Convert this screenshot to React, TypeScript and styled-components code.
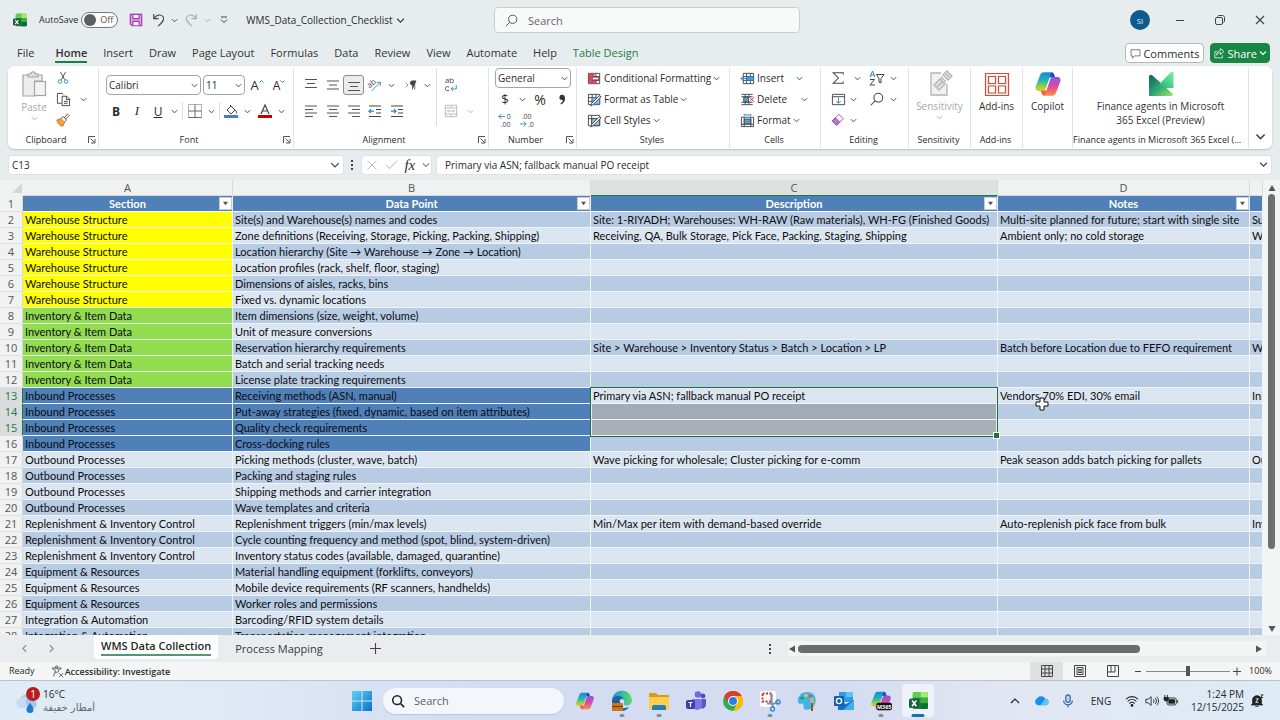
import React from 'react';
import styled, { createGlobalStyle, css } from 'styled-components';

const ui = `"Open Sans", "Noto Sans", "DejaVu Sans", sans-serif`;
const cellFont = `Lato, Carlito, "Open Sans", "DejaVu Sans", sans-serif`;

const Global = createGlobalStyle`
  * { box-sizing: border-box; }
  body { margin: 0; background: #e7edee; }
  button, input, select { font-family: inherit; font-size: inherit; color: inherit; margin: 0; }
  button { background: none; border: 0; padding: 0; cursor: pointer; }
  svg { display: block; flex: none; overflow: visible; }
`;

/* ---------- shell ---------- */
const Shell = styled.div`
  display: flex;
  flex-direction: column;
  height: 100vh;
  overflow: hidden;
  font: 10px/14px ${ui};
  color: #2b2b2b;
  background: #e7edee;
`;

const TitleBar = styled.header`
  display: grid;
  grid-template-columns: 494px 306px minmax(0, 1fr);
  align-items: center;
  height: 40px;
  flex: none;
`;

const TitleLeft = styled.div`
  display: flex;
  align-items: center;
  padding-left: 13px;
`;

const AutoSave = styled.label`
  display: flex;
  align-items: center;
  gap: 3px;
  margin: 0 6px 0 12px;
  font-size: 9px;
`;

const Toggle = styled.span`
  position: relative;
  display: flex;
  align-items: center;
  width: 37px;
  height: 16px;
  border: 1px solid #777;
  border-radius: 8px;
  background: #fdfdfd;
  padding-left: 18px;
  color: #555;
  &::before {
    content: '';
    position: absolute;
    left: 2px;
    top: 1px;
    width: 12px;
    height: 12px;
    border-radius: 50%;
    background: #5c5f60;
  }
  input { position: absolute; inset: 0; opacity: 0; }
`;

const BarButton = styled.button<{ $w: number }>`
  display: flex;
  align-items: center;
  justify-content: center;
  flex: none;
  width: ${(p) => p.$w}px;
  height: 20px;
`;

const FileName = styled.button`
  display: flex;
  align-items: center;
  gap: 3px;
  margin-left: 9px;
`;

const SearchBox = styled.label`
  display: flex;
  align-items: center;
  gap: 10px;
  height: 26px;
  padding: 0 10px;
  border: 1px solid #c9cfd0;
  border-radius: 4px;
  background: #f8fafa;
  font-size: 11px;
  input {
    flex: 1;
    min-width: 0;
    border: 0;
    padding: 0;
    background: none;
    outline: 0;
  }
  input::placeholder { color: #666; opacity: 1; }
`;

const WindowButtons = styled.div`
  display: flex;
  align-items: center;
  justify-content: flex-end;
`;

const Avatar = styled.button`
  width: 20px;
  height: 20px;
  margin-right: 10px;
  border-radius: 50%;
  background: #0d5a8c;
  color: #e8f2f8;
  font-size: 8px;
`;

/* ---------- ribbon tabs ---------- */
const TabRow = styled.nav`
  display: flex;
  align-items: center;
  height: 26px;
  flex: none;
  padding: 0 10px 0 9px;
  font-size: 11px;
`;

const Tab = styled.button<{ $active?: boolean; $accent?: boolean }>`
  height: 22px;
  padding: 0 8px;
  color: ${(p) => (p.$accent ? '#1e7b45' : '#333')};
  font-weight: ${(p) => (p.$active ? 600 : 400)};
  &:first-child { margin-right: 5px; }
  span {
    display: block;
    line-height: 17px;
    border-bottom: 2px solid ${(p) => (p.$active ? '#1b7f43' : 'transparent')};
  }
`;

const Actions = styled.div`
  display: flex;
  gap: 6px;
  margin-left: auto;
`;

const ActionButton = styled.button<{ $primary?: boolean }>`
  display: flex;
  align-items: center;
  gap: 2px;
  height: 20px;
  padding: 0 ${(p) => (p.$primary ? 2 : 4)}px;
  border-radius: 4px;
  border: 1px solid ${(p) => (p.$primary ? '#178743' : '#b4b8b9')};
  background: ${(p) => (p.$primary ? '#178743' : '#fff')};
  color: ${(p) => (p.$primary ? '#fff' : '#2b2b2b')};
`;

/* ---------- ribbon ---------- */
const Ribbon = styled.section`
  display: flex;
  flex: none;
  height: 83px;
  margin: 0 8px;
  padding: 2px 0 1px;
  background: #fff;
  border-radius: 6px;
  box-shadow: 0 1px 2px #b9c0c3;
`;

const Group = styled.div<{ $w: number }>`
  display: flex;
  flex-direction: column;
  flex: 0 0 ${(p) => p.$w}px;
  min-width: 0;
  border-right: 1px solid #e1e4e5;
`;

const Body = styled.div<{ $pad?: number; $x?: number; $gap?: number; $w?: number }>`
  display: flex;
  flex-direction: column;
  flex: ${(p) => (p.$w ? `0 0 ${p.$w}px` : '1')};
  gap: ${(p) => p.$gap ?? 0}px;
  padding: ${(p) => p.$pad ?? 0}px 0 0 ${(p) => p.$x ?? 0}px;
`;

const Caption = styled.div`
  display: flex;
  align-items: center;
  gap: 4px;
  height: 16px;
  padding-right: 2px;
  font-size: 9px;
  line-height: 16px;
  white-space: nowrap;
  span {
    flex: 1;
    text-align: center;
    overflow: hidden;
    text-overflow: ellipsis;
  }
`;

const Row = styled.div<{ $gap?: number }>`
  display: flex;
  align-items: center;
  height: 20px;
  gap: ${(p) => p.$gap ?? 0}px;
`;

const Columns = styled.div`
  display: flex;
  flex: 1;
`;

const Tool = styled.button<{ $w?: number; $on?: boolean; $dim?: boolean }>`
  display: flex;
  align-items: center;
  justify-content: center;
  flex: none;
  width: ${(p) => p.$w ?? 22}px;
  height: 20px;
  opacity: ${(p) => (p.$dim ? 0.4 : 1)};
  ${(p) =>
    p.$on &&
    css`
      background: #ececec;
      border: 1px solid #8d8d8d;
      border-radius: 3px;
    `}
`;

const Divider = styled.i<{ $h?: number; $m?: number }>`
  width: 1px;
  height: ${(p) => p.$h ?? 18}px;
  margin: 0 ${(p) => p.$m ?? 0}px;
  background: #dcdfe0;
`;

const Combo = styled.span<{ $w: number }>`
  position: relative;
  display: flex;
  align-items: center;
  flex: none;
  width: ${(p) => p.$w}px;
  height: 20px;
  border: 1px solid #a3a6a7;
  border-radius: 4px;
  background: #fff;
  select {
    appearance: none;
    flex: 1;
    min-width: 0;
    height: 18px;
    padding: 0 0 0 2px;
    border: 0;
    background: none;
  }
  svg { position: absolute; right: 2px; pointer-events: none; }
`;

const TextTool = styled.button`
  display: flex;
  align-items: center;
  gap: 2px;
  height: 20px;
  white-space: nowrap;
`;

const Spacer = styled.i<{ $w: number }>`
  flex: none;
  width: ${(p) => p.$w}px;
`;

const Push = styled.i`
  margin-left: auto;
`;

const BigTool = styled.button<{ $dim?: boolean }>`
  display: flex;
  flex-direction: column;
  align-items: center;
  width: 100%;
  gap: 1px;
  line-height: 14px;
  color: ${(p) => (p.$dim ? '#a9a9a9' : '#333')};
`;

const Letter = styled.span<{ $bold?: boolean; $italic?: boolean; $line?: boolean; $size?: number }>`
  font-size: ${(p) => p.$size ?? 12}px;
  font-weight: ${(p) => (p.$bold ? 700 : 400)};
  font-style: ${(p) => (p.$italic ? 'italic' : 'normal')};
  text-decoration: ${(p) => (p.$line ? 'underline' : 'none')};
  ${(p) => p.$italic && css`font-family: "Liberation Serif", serif;`}
`;

const Collapse = styled.button`
  align-self: flex-end;
  margin: 0 6px 6px auto;
`;

/* ---------- formula bar ---------- */
const FormulaRow = styled.section`
  display: flex;
  align-items: center;
  flex: none;
  height: 31px;
  padding: 0 8px;
`;

const Field = styled.label<{ $w?: number }>`
  display: flex;
  align-items: center;
  flex: ${(p) => (p.$w ? `0 0 ${p.$w}px` : '1 1 0')};
  min-width: 0;
  height: 20px;
  padding: 0 3px;
  border: 1px solid #dde2e3;
  border-radius: 4px;
  background: #fff;
  input {
    flex: 1;
    min-width: 0;
    height: 18px;
    padding: 0;
    border: 0;
    outline: 0;
    background: none;
  }
`;

const Dots = styled.span<{ $w: number }>`
  display: flex;
  justify-content: center;
  width: ${(p) => p.$w}px;
`;

const FxBox = styled.div`
  display: flex;
  align-items: center;
  justify-content: space-between;
  width: 71px;
  height: 20px;
  padding: 0 1px 0 4px;
  margin-right: 4px;
  border: 1px solid #dde2e3;
  border-radius: 4px;
  background: #fff;
`;

const Fx = styled.em`
  font: italic 400 15px/16px "Liberation Serif", serif;
`;

/* ---------- grid ---------- */
const GridArea = styled.main`
  display: flex;
  flex: 1;
  min-height: 0;
  background: #f2f3f3;
`;

const Sheet = styled.div`
  position: relative;
  flex: 1;
  min-width: 0;
  overflow: hidden;
`;

const Table = styled.table`
  width: 100%;
  table-layout: fixed;
  border-collapse: separate;
  border-spacing: 0;
  font: 11px/15px ${cellFont};
  color: #0b0b12;
  th, td {
    height: 16px;
    padding: 0;
    font-weight: 400;
    white-space: nowrap;
  }
`;

const Letters = styled.th<{ $sel?: boolean }>`
  font: 11px/15px ${ui};
  color: #555;
  background: ${(p) => (p.$sel ? '#dfe1e1' : '#f0f1f1')};
  border-right: 1px solid #d9dbdb;
  border-bottom: 1px solid ${(p) => (p.$sel ? '#1e7b45' : '#d9dbdb')};
`;

const Corner = styled.th`
  background: #f0f1f1;
  border-right: 1px solid #f0f1f1;
  svg { margin-left: auto; }
`;

const RowNo = styled.th<{ $sel?: boolean }>`
  font: 11px/15px ${ui};
  text-align: center;
  color: ${(p) => (p.$sel ? '#1e7b45' : '#555')};
  background: ${(p) => (p.$sel ? '#d9dcdc' : '#f0f1f1')};
  border-right: 1px solid ${(p) => (p.$sel ? '#1e7b45' : '#d5d8d8')};
  border-bottom: 1px solid #dcdfdf;
`;

const HeadCell = styled.th`
  position: relative;
  && { font-weight: 700; }
  color: #fff;
  background: #5080b8;
  border-right: 1px solid #e5edf6;
  border-bottom: 1px solid #fff;
  overflow: hidden;
`;

const Filter = styled.button`
  position: absolute;
  right: 0;
  top: 1px;
  display: flex;
  align-items: center;
  justify-content: center;
  width: 13px;
  height: 13px;
  background: #fff;
  border: 1px solid #c5cbd2;
`;

const Cell = styled.td<{ $bg: string; $open?: boolean }>`
  position: relative;
  background: ${(p) => p.$bg};
  border-right: 1px solid #eef4fa;
  border-bottom: 1px solid #eef4fa;
  overflow: ${(p) => (p.$open ? 'visible' : 'hidden')};
  && { padding-left: 2px; }
`;

const Selection = styled.i`
  position: absolute;
  z-index: 2;
  left: -1px;
  top: -1px;
  width: calc(100% + 2px);
  height: 50px;
  border: 1px solid #1e6e42;
  outline: 1px solid #e8f0ea;
  outline-offset: -2px;
  pointer-events: none;
  &::after {
    content: '';
    position: absolute;
    right: -3px;
    bottom: -3px;
    width: 5px;
    height: 5px;
    background: #1e6e42;
    border: 1px solid #fff;
  }
`;

const Pointer = styled.span`
  position: absolute;
  left: 1035px;
  top: 217px;
  z-index: 3;
`;

const VScroll = styled.div`
  display: flex;
  flex-direction: column;
  align-items: center;
  gap: 2px;
  width: 17px;
  padding: 4px 0 2px;
  background: #f3f4f4;
`;

const VThumb = styled.i`
  flex: 0 1 355px;
  width: 7px;
  margin-bottom: auto;
  border-radius: 4px;
  background: #6f6f6f;
`;

/* ---------- sheet tabs ---------- */
const SheetBar = styled.div`
  display: flex;
  align-items: center;
  flex: none;
  height: 27px;
  padding: 0 14px 0 10px;
  background: #e9edef;
  font-size: 11px;
`;

const SheetTab = styled.button<{ $active?: boolean }>`
  align-self: flex-start;
  height: 24px;
  padding: 0 7px;
  border-radius: 0 0 4px 4px;
  ${(p) =>
    p.$active
      ? css`
          background: #fff;
          font-weight: 600;
          color: #1f2a25;
          span { display: block; line-height: 16px; border-bottom: 2px solid #4e9a74; }
        `
      : css`
          padding: 3px 17px 0;
          color: #3b3b3b;
        `}
`;

const HScroll = styled.div`
  display: flex;
  align-items: center;
  gap: 2px;
  flex: 0 0 478px;
  height: 15px;
  padding-right: 3px;
  background: #f3f4f4;
`;

const HThumb = styled.i`
  flex: 0 1 342px;
  height: 8px;
  margin-right: auto;
  border-radius: 4px;
  background: #6c6c6c;
`;

const Status = styled.footer`
  display: flex;
  align-items: center;
  flex: none;
  height: 19px;
  padding: 0 8px 0 9px;
  background: #f4f5f5;
  border-bottom: 1px solid #b9c3cb;
  font-size: 9px;
`;

const Access = styled.button`
  display: flex;
  align-items: center;
  gap: 1px;
  margin: 0 auto 0 16px;
  font-weight: 600;
`;

const ViewButton = styled.button<{ $on?: boolean }>`
  display: flex;
  align-items: center;
  justify-content: center;
  width: 33px;
  height: 18px;
  background: ${(p) => (p.$on ? '#dfe1e1' : 'transparent')};
`;

const ZoomSlider = styled.input`
  appearance: none;
  width: 84px;
  height: 14px;
  margin: 0 3px;
  background: linear-gradient(#8a8a8a, #8a8a8a) center / 100% 1px no-repeat;
  &::-webkit-slider-thumb {
    appearance: none;
    width: 4px;
    height: 10px;
    background: #555;
  }
`;

/* ---------- taskbar ---------- */
const Taskbar = styled.footer`
  display: grid;
  grid-template-columns: minmax(0, 1fr) auto minmax(0, 1fr);
  align-items: center;
  flex: none;
  height: 39px;
  background: linear-gradient(90deg, #dfebf5 0, #dfe9f6 18%, #d4dcf2 38%, #d5dcf1 66%, #e2e6f3 78%, #dcebf4 100%);
`;

const Weather = styled.button`
  display: flex;
  align-items: center;
  gap: 2px;
  padding-left: 15px;
  text-align: left;
  line-height: 13px;
  span { display: block; }
  span + span { font-family: "DejaVu Sans", sans-serif; color: #666; }
`;

const Apps = styled.nav`
  display: flex;
  align-items: center;
  gap: 5px;
`;

const AppButton = styled.button<{ $active?: boolean; $running?: boolean }>`
  position: relative;
  display: flex;
  align-items: center;
  justify-content: center;
  width: 32px;
  height: 33px;
  border-radius: 4px;
  background: ${(p) => (p.$active ? '#edf2fa' : 'transparent')};
  &::after {
    content: '';
    position: absolute;
    bottom: 0;
    left: 50%;
    transform: translateX(-50%);
    display: ${(p) => (p.$active || p.$running ? 'block' : 'none')};
    width: ${(p) => (p.$active ? 13 : 5)}px;
    height: 3px;
    border-radius: 2px;
    background: ${(p) => (p.$active ? '#1673ad' : '#848a96')};
  }
`;

const TaskSearch = styled.label`
  display: flex;
  align-items: center;
  gap: 9px;
  width: 181px;
  height: 26px;
  padding: 0 8px;
  border-radius: 13px;
  background: #f3f7fc;
  box-shadow: 0 1px 1px #bcc5d6;
  font-size: 11px;
  input { flex: 1; min-width: 0; border: 0; padding: 0; background: none; outline: 0; }
  input::placeholder { color: #5c6068; opacity: 1; }
`;

const Tray = styled.div`
  display: flex;
  align-items: center;
  justify-content: flex-end;
  padding-right: 16px;
`;

const Clock = styled.time`
  width: 64px;
  margin-right: 6px;
  text-align: right;
  line-height: 13px;
  white-space: nowrap;
`;

/* ---------- icons ---------- */
type IconProps = { s?: number; h?: number; vb?: string; children: React.ReactNode; c?: string; sw?: number };
const Icon = ({ s = 16, h, vb = '0 0 16 16', children, c = '#444', sw = 1 }: IconProps) => (
  <svg width={s} height={h ?? s} viewBox={vb} fill="none" stroke={c} strokeWidth={sw} aria-hidden="true">
    {children}
  </svg>
);
const Chev = ({ s = 7, c = '#444' }: { s?: number; c?: string }) => (
  <Icon s={s} vb="0 0 8 8" c={c} sw={1.1}><path d="M1 2.500l3 3 3-3" /></Icon>
);
const Drop = ({ w = 12, dim }: { w?: number; dim?: boolean }) => (
  <Tool $w={w} $dim={dim} aria-label="More options"><Chev s={7} /></Tool>
);
const Launcher = () => (
  <Icon s={8} vb="0 0 8 8" c="#555"><path d="M.5 7V.5H7M2.500 2.500L6.500 6.500M7 3v4H3" /></Icon>
);
const Lines = ({ d }: { d: string }) => <Icon s={14} vb="0 0 14 14" c="#555" sw={1.2}><path d={d} /></Icon>;

const ExcelLogo = ({ s = 14 }: { s?: number }) => (
  <Icon s={s} vb="0 0 20 20" c="none">
    <rect x="4" y="1" width="16" height="18" rx="2" fill="#1d8a3f" />
    <path d="M4 3a2 2 0 012-2h6v6H4z" fill="#5fd04f" />
    <path d="M12 1h6a2 2 0 012 2v4h-8z" fill="#a4ec6b" />
    <path d="M12 7h8v6h-8z" fill="#3dae46" />
    <path d="M12 13h8v4a2 2 0 01-2 2h-6z" fill="#0f6e33" />
    <rect x="0" y="8" width="11" height="10" rx="2" fill="#14613a" />
    <path d="M3.200 10l4.600 6M7.800 10l-4.600 6" stroke="#fff" strokeWidth="1.600" />
  </Icon>
);
const CopilotLogo = ({ s = 20, tag }: { s?: number; tag?: boolean }) => (
  <Icon s={s} vb="0 0 24 24" c="none">
    <defs>
      <linearGradient id="cpA" x1="0" y1="0" x2="0" y2="1">
        <stop offset="0" stopColor="#1788e0" /><stop offset=".45" stopColor="#22b8b0" /><stop offset=".8" stopColor="#9fd13f" /><stop offset="1" stopColor="#f6c52b" />
      </linearGradient>
      <linearGradient id="cpB" x1="0" y1="0" x2="0" y2="1">
        <stop offset="0" stopColor="#8a55e8" /><stop offset=".5" stopColor="#e0489f" /><stop offset="1" stopColor="#ff8f3c" />
      </linearGradient>
    </defs>
    <path d="M15 2H8.500C6.500 2 5.500 3.500 5 5L1.500 14c-.8 2.500.5 4 2.500 4h3.500c1.500 0 2.300-1 2.800-2.500L13.500 6c.4-1.500 1-2.500 2.500-2.500z" fill="url(#cpA)" />
    <path d="M15 2c1.300 0 2 .8 2.400 2l.8 2.500h-5L14 4z" fill="#1a4fc0" />
    <path d="M9 22h6.500c2 0 3-1.500 3.500-3l3.500-9c.8-2.500-.5-4-2.500-4h-3.500c-1.500 0-2.300 1-2.800 2.500L10.500 18c-.4 1.500-1 2.500-2.500 2.500z" fill="url(#cpB)" />
    <path d="M9 22c-1.300 0-2-.8-2.400-2L5.800 17.500h5L10 20z" fill="#f0633c" />
    {tag && <rect x="7" y="14" width="17" height="8" rx="2" fill="#111" />}
    {tag && <text x="15.500" y="20.200" fontSize="6" fontWeight="700" fill="#fff" textAnchor="middle">M365</text>}
  </Icon>
);

const table3 = 'M1.500 2.500h12v11h-12zM1.500 6h12M1.500 10h12M5.500 2.500v11M9.500 2.500v11';

/* ---------- data ---------- */
const tabs = ['File', 'Home', 'Insert', 'Draw', 'Page Layout', 'Formulas', 'Data', 'Review', 'View', 'Automate', 'Help', 'Table Design'];

type Line = [string, string, string?, string?, string?];
const W = 'Warehouse Structure';
const V = 'Inventory & Item Data';
const I = 'Inbound Processes';
const O = 'Outbound Processes';
const R = 'Replenishment & Inventory Control';
const E = 'Equipment & Resources';
const A = 'Integration & Automation';
const lines: Line[] = [
  [W, 'Site(s) and Warehouse(s) names and codes', 'Site: 1-RIYADH; Warehouses: WH-RAW (Raw materials), WH-FG (Finished Goods)', 'Multi-site planned for future; start with single site', 'Su'],
  [W, 'Zone definitions (Receiving, Storage, Picking, Packing, Shipping)', 'Receiving, QA, Bulk Storage, Pick Face, Packing, Staging, Shipping', 'Ambient only; no cold storage', 'W'],
  [W, 'Location hierarchy (Site → Warehouse → Zone → Location)'],
  [W, 'Location profiles (rack, shelf, floor, staging)'],
  [W, 'Dimensions of aisles, racks, bins'],
  [W, 'Fixed vs. dynamic locations'],
  [V, 'Item dimensions (size, weight, volume)'],
  [V, 'Unit of measure conversions'],
  [V, 'Reservation hierarchy requirements', 'Site > Warehouse > Inventory Status > Batch > Location > LP', 'Batch before Location due to FEFO requirement', 'W'],
  [V, 'Batch and serial tracking needs'],
  [V, 'License plate tracking requirements'],
  [I, 'Receiving methods (ASN, manual)', 'Primary via ASN; fallback manual PO receipt', 'Vendors 70% EDI, 30% email', 'Inb'],
  [I, 'Put-away strategies (fixed, dynamic, based on item attributes)'],
  [I, 'Quality check requirements'],
  [I, 'Cross-docking rules'],
  [O, 'Picking methods (cluster, wave, batch)', 'Wave picking for wholesale; Cluster picking for e-comm', 'Peak season adds batch picking for pallets', 'Ou'],
  [O, 'Packing and staging rules'],
  [O, 'Shipping methods and carrier integration'],
  [O, 'Wave templates and criteria'],
  [R, 'Replenishment triggers (min/max levels)', 'Min/Max per item with demand-based override', 'Auto-replenish pick face from bulk', 'Inv'],
  [R, 'Cycle counting frequency and method (spot, blind, system-driven)'],
  [R, 'Inventory status codes (available, damaged, quarantine)'],
  [E, 'Material handling equipment (forklifts, conveyors)'],
  [E, 'Mobile device requirements (RF scanners, handhelds)'],
  [E, 'Worker roles and permissions'],
  [A, 'Barcoding/RFID system details'],
  [A, 'Transportation management integration'],
];

const fillFor = (n: number, col: number) => {
  if (col === 0 && n <= 7) return '#ffff00';
  if (col === 0 && n <= 12) return '#92dc50';
  if (col <= 1 && n >= 13 && n <= 16) return '#5080b8';
  if (col === 2 && n === 14) return '#a3abb7';
  if (col === 2 && n === 15) return '#a9afb7';
  return n % 2 === 0 ? '#b7cbe2' : '#dce6f0';
};

/* ---------- ribbon groups ---------- */
const Clipboard = () => (
  <Group $w={91}>
    <Columns>
      <Body $pad={3} $x={8} $w={44}>
        <BigTool $dim>
          <Icon s={26} h={28} vb="0 0 26 28" c="#a5a5a5" sw={1.2}>
            <path d="M2 4h19v6h-7v15H2z" fill="#ededed" /><path d="M7 6V3h2.500C10 0 14 0 14.500 3H17v3z" fill="#ddd" /><rect x="13.500" y="10.500" width="11" height="14" fill="#f3f3f3" />
          </Icon>
          Paste
          <Chev c="#aaa" />
        </BigTool>
      </Body>
      <Body $gap={1}>
        <Row><Tool $w={22} aria-label="Cut"><Icon s={14}><path d="M5 1l5 9M11 1L6 10" /><circle cx="4.500" cy="12" r="2" stroke="#2d86b5" /><circle cx="11.500" cy="12" r="2" stroke="#2d86b5" /></Icon></Tool></Row>
        <Row><Tool $w={22} aria-label="Copy"><Icon s={15}><path d="M6 12H1.500V1.500H7l1 1M6.500 4.500h5l3 3v7h-8zM11 4.500V8h3.500M8.500 10h4M8.500 12h4" /></Icon></Tool><Drop w={18} /></Row>
        <Row><Tool $w={22} aria-label="Format Painter"><Icon s={14}><path d="M1 8l5-2 4 4-2 5c-3 0-6-2-7-7z" fill="#f0a04a" stroke="#cf6f1a" /><path d="M6 6l2-2 4 4-2 2M9.500 5.500L13 1l2 2-4 4" fill="#fff" /></Icon></Tool></Row>
      </Body>
    </Columns>
    <Caption><span>Clipboard</span><Launcher /></Caption>
  </Group>
);

const FontGroup = () => (
  <Group $w={195}>
    <Body $pad={7} $x={7} $gap={6}>
      <Row $gap={2}>
        <Combo $w={95}><select aria-label="Font" defaultValue="Calibri"><option>Calibri</option></select><Chev /></Combo>
        <Combo $w={42}><select aria-label="Font size" defaultValue="11"><option>11</option></select><Chev /></Combo>
        <Tool $w={20} aria-label="Increase font size"><Letter $size={13}>A</Letter><Icon s={5} h={13} vb="0 0 8 20" c="#2d86b5" sw={1.6}><path d="M1 5l3-3 3 3" /></Icon></Tool>
        <Tool $w={20} aria-label="Decrease font size"><Letter $size={12}>A</Letter><Icon s={5} h={13} vb="0 0 8 20" c="#2d86b5" sw={1.6}><path d="M1 2l3 3 3-3" /></Icon></Tool>
      </Row>
      <Row>
        <Tool $w={20} aria-label="Bold"><Letter $bold>B</Letter></Tool>
        <Tool aria-label="Italic"><Letter $italic $size={13}>I</Letter></Tool>
        <Tool $w={20} aria-label="Underline"><Letter $line>U</Letter></Tool>
        <Drop /><Divider $m={2} />
        <Tool $w={20} aria-label="Borders"><Icon s={14} vb="0 0 14 14" c="#666"><path d="M.5.500h13v13H.5z" strokeDasharray="1 1" /><path d="M7 .5v13M.5 7h13M.5 13.500h13" /></Icon></Tool>
        <Drop /><Divider $m={2} />
        <Tool $w={18} aria-label="Fill colour"><Icon s={14} vb="0 0 14 14"><path d="M3 6l4-4 4 4-4 4zM6 1l3 3M11 6c2 1.500 2 3 1 3.500" fill="none" /><rect y="11" width="14" height="3" fill="#4a7ebb" stroke="none" /></Icon></Tool>
        <Drop w={14} />
        <Tool aria-label="Font colour"><Icon s={14} vb="0 0 14 14" sw={1.2}><path d="M3 10l4-9 4 9M4.500 7h5" /><rect y="11" width="14" height="3" fill="#c00000" stroke="none" /></Icon></Tool>
        <Drop w={10} />
      </Row>
    </Body>
    <Caption><span>Font</span><Launcher /></Caption>
  </Group>
);

const Alignment = () => (
  <Group $w={195}>
    <Columns>
      <Body $pad={7} $x={6} $gap={6}>
        <Row>
          <Tool aria-label="Top align"><Lines d="M1 1.500h12M3 5.500h8M1 9.500h12" /></Tool>
          <Tool $w={21} aria-label="Middle align"><Lines d="M1 3h12M3 7h8M1 11h12" /></Tool>
          <Tool $w={21} $on aria-label="Bottom align"><Lines d="M1 4.500h12M3 8.500h8M1 12.500h12" /></Tool>
          <Tool $w={21} aria-label="Orientation"><Icon s={14}><text x="0" y="9" fontSize="9" fill="#444" stroke="none" transform="rotate(-40 5 8)">ab</text><path d="M4 15L14 5M10 5h4v4" stroke="#2d86b5" /></Icon></Tool>
          <Drop /><Spacer $w={4} />
          <Tool $w={20} aria-label="Text direction"><Icon s={12}><path d="M1 5l3 3-3 3" stroke="#2d86b5" /><path d="M10 14V2.500h5M13 14V2.500M10 8c-4 0-4-5.500 0-5.500z" fill="#444" /></Icon></Tool>
          <Drop />
        </Row>
        <Row>
          <Tool aria-label="Align left"><Lines d="M1 2h12M1 5.500h8M1 9h12M1 12.500h8" /></Tool>
          <Tool $w={21} aria-label="Centre"><Lines d="M1 2h12M3 5.500h8M1 9h12M3 12.500h8" /></Tool>
          <Tool $w={21} aria-label="Align right"><Lines d="M1 2h12M5 5.500h8M1 9h12M5 12.500h8" /></Tool>
          <Tool $w={22} aria-label="Decrease indent"><Icon s={14} vb="0 0 14 14" sw={1.2}><path d="M1 2h12M8 5.500h5M8 9h5M1 12.500h12" /><path d="M6 7.200H1M3 5.200L1 7.200l2 2" stroke="#2d86b5" /></Icon></Tool>
          <Tool $w={21} aria-label="Increase indent"><Icon s={14} vb="0 0 14 14" sw={1.2}><path d="M1 2h12M8 5.500h5M8 9h5M1 12.500h12" /><path d="M1 7.200h5M4 5.200l2 2-2 2" stroke="#2d86b5" /></Icon></Tool>
        </Row>
      </Body>
      <Divider $h={58} $m={3} />
      <Body $pad={7} $gap={6}>
        <Row><Tool aria-label="Wrap text"><Icon s={14}><text x="1" y="6" fontSize="9" fill="#444" stroke="none">ab</text><path d="M6 10.500c-3-1.500-4.500 0-4.500 1.800S4 15.500 6 14" /><path d="M14 8v4.500H8M10.500 10L8 12.500l2.500 2.500" stroke="#2d86b5" /></Icon></Tool></Row>
        <Row><Tool $dim aria-label="Merge"><Icon s={14}><path d="M1.500 1.500h13v13h-13zM1.500 4.500h13M1.500 11.500h13M8 1.500v3M8 11.500v3M4 8h8M5.500 6.500L4 8l1.500 1.500M10.500 6.500L12 8l-1.500 1.500" /></Icon></Tool><Drop w={16} dim /></Row>
      </Body>
    </Columns>
    <Caption><span>Alignment</span><Launcher /></Caption>
  </Group>
);

const NumberGroup = () => (
  <Group $w={88}>
    <Body $x={6} $gap={1}>
      <Row><Combo $w={76}><select aria-label="Number format" defaultValue="General"><option>General</option></select><Chev /></Combo></Row>
      <Row>
        <Tool $w={20} aria-label="Currency"><Letter $size={13}>$</Letter></Tool><Drop w={14} />
        <Tool aria-label="Percent"><Letter $size={14}>%</Letter></Tool>
        <Tool aria-label="Comma style"><Icon s={8} h={11} vb="0 0 9 13" c="none"><path d="M5 1a3 3 0 00-1 6c.8.200 1.500 0 1.500 0-.3 2-1.500 3.500-3 4.500l.8 1C7 10.500 8.500 7.500 8 4 7.700 2 6.500 1 5 1z" fill="#333" /></Icon></Tool>
      </Row>
      <Row $gap={2}>
        <Tool $w={20} aria-label="Increase decimal"><Icon s={14}><text x="10" y="7" fontSize="8" fill="#444" stroke="none">0</text><text x="3" y="16" fontSize="8" fill="#444" stroke="none">.00</text><path d="M8 4H1M4 1L1 4l3 3" stroke="#2d86b5" /></Icon></Tool>
        <Tool $w={20} aria-label="Decrease decimal"><Icon s={14}><text x="2" y="7" fontSize="8" fill="#444" stroke="none">.00</text><text x="9" y="16" fontSize="8" fill="#444" stroke="none">.0</text><path d="M0 12.500h7M4 9.500l3 3-3 3" stroke="#2d86b5" /></Icon></Tool>
      </Row>
    </Body>
    <Caption><span>Number</span><Launcher /></Caption>
  </Group>
);

const Styles = () => (
  <Group $w={153}>
    <Body $x={10} $gap={1}>
      <TextTool><Icon s={15}><path d={table3} /><path d="M2 3h6v3H5v4h5v3H2z" fill="#e0485a" stroke="none" /><path d="M5.500 6.500h7v3h-7z" fill="#fff" stroke="#8a2c3a" /></Icon>Conditional Formatting<Chev /></TextTool>
      <TextTool><Icon s={15}><path d={table3} /><path d="M5.500 6h8v7h-8z" fill="#8cc4ea" stroke="#2d78b5" /><path d="M15 5L7 13l-3 2 1-3 8-8z" fill="#fff" /></Icon>Format as Table<Chev /></TextTool>
      <TextTool><Icon s={15}><path d="M1.500 2.500h12v11h-12zM1.500 6h12M5 2.500v11" /><path d="M5 6h8.500v7.500H5z" fill="#8cc4ea" /><path d="M15 5L7 13l-3 2 1-3 8-8z" fill="#fff" /></Icon>Cell Styles<Chev /></TextTool>
    </Body>
    <Caption><span>Styles</span></Caption>
  </Group>
);

const Cells = () => (
  <Group $w={91}>
    <Body $x={10} $gap={1}>
      <TextTool><Icon s={15}><path d="M3.500 2.500h11v11h-11zM3.500 6h11M3.500 10h11M7 2.500v11M11 2.500v11" /><path d="M7 6h7.500v4H7z" fill="#4aa3df" stroke="#2d78b5" /><path d="M7 8H1M3.500 5.500L1 8l2.500 2.500" stroke="#2d86b5" /></Icon>Insert<Spacer $w={8} /><Chev /></TextTool>
      <TextTool><Icon s={15}><path d="M1.500 2.500h12M1.500 5h12M5.500 2.500V5M9.500 2.500V5M1.500 11h12M1.500 13.500h12M5.500 11v2.500M9.500 11v2.500" /><path d="M4 5.500h5v5H4z" fill="#4aa3df" /><path d="M10 5.500l5 5M15 5.500l-5 5" stroke="#c8283c" /></Icon>Delete<Spacer $w={10} /><Chev /></TextTool>
      <TextTool><Icon s={15}><path d="M1.500 4.500h13v10h-13zM1.500 12h13M4.500 4.500v10M11.500 4.500v10" /><path d="M4.500 6.500h7v5h-7z" fill="#4aa3df" /><path d="M4.500 1v2M11.500 1v2M4.500 2h7" stroke="#2d86b5" /></Icon>Format<Chev /></TextTool>
    </Body>
    <Caption><span>Cells</span></Caption>
  </Group>
);

const Editing = () => (
  <Group $w={88}>
    <Body $x={6} $gap={1}>
      <Row><Tool aria-label="AutoSum"><Icon s={14} sw={1.2}><path d="M14 4V2H2.500l6 6-6 6H14v-2" /></Icon></Tool><Spacer $w={2} /><Drop /><Spacer $w={2} />
        <Tool $w={24} aria-label="Sort and filter"><Icon s={16}><path d="M1 7l2.500-6L6 7M2 5h3" stroke="#2d86b5" /><path d="M1 9.500h4.500L1 15h5" /><path d="M7.500 4.500H15l-3 4V13l-2-1V8.500z" /></Icon></Tool><Drop w={8} /></Row>
      <Row><Tool aria-label="Fill"><Icon s={15}><path d="M1.500 2.500h13v11h-13zM1.500 5h13" /><path d="M8 6v6M5.500 9.500L8 12l2.500-2.500" stroke="#2d86b5" /></Icon></Tool><Drop w={8} /><Spacer $w={8} />
        <Tool $w={24} aria-label="Find"><Icon s={14} sw={1.2}><circle cx="9.500" cy="6.500" r="5" /><path d="M6 10l-5 5" /></Icon></Tool><Drop w={8} /></Row>
      <Row><Tool aria-label="Clear"><Icon s={14} c="#8a3fa8"><path d="M9 1.500l5 5L6.500 14 1.500 9z" fill="#fff" /><path d="M5 5.500l5 5L6.500 14 1.500 9z" fill="#b978d0" /></Icon></Tool><Drop w={8} /></Row>
    </Body>
    <Caption><span>Editing</span></Caption>
  </Group>
);

const RestGroups = () => (
  <>
    <Group $w={62}>
      <Body $pad={2}>
        <BigTool $dim>
          <Icon s={26} h={28} vb="0 0 26 28" c="#b3b3b3" sw={1.3}>
            <path d="M14 3H4v22h16V14" fill="#f1f1f1" /><path d="M16 5l4-4 5 5-4 4zM14 7l5 5M7 15l6-6 5 5-6 6zM9.500 17.500l6-6M19 4l3 3" fill="#e2e2e2" />
          </Icon>
          Sensitivity
          <Chev c="#aaa" />
        </BigTool>
      </Body>
      <Caption><span>Sensitivity</span></Caption>
    </Group>
    <Group $w={52}>
      <Body $pad={2}>
        <BigTool>
          <Icon s={26} h={28} vb="0 0 26 28" c="#c8533a" sw={1.2}>
            <path d="M1.500 3.500h23v22h-23z" fill="#fdeee9" /><path d="M4.500 6.500h7v7h-7zM14.500 6.500h7v7h-7zM4.500 16h7v7h-7zM14.500 16h7v7h-7z" fill="#fff" />
          </Icon>
          Add-ins
        </BigTool>
      </Body>
      <Caption><span>Add-ins</span></Caption>
    </Group>
    <Group $w={50}>
      <Body $pad={2}>
        <BigTool><CopilotLogo s={28} />Copilot</BigTool>
      </Body>
    </Group>
    <Group $w={176}>
      <Body $pad={2}>
        <BigTool>
          <Icon s={26} h={28} vb="0 0 26 28" c="none">
            <defs>
              <linearGradient id="finBack" x1="1" y1="0" x2="0" y2="1"><stop offset="0" stopColor="#7df0a0" /><stop offset=".6" stopColor="#25b878" /><stop offset="1" stopColor="#1d8fa0" /></linearGradient>
              <linearGradient id="finFront" x1="0" y1="0" x2="1" y2="1"><stop offset="0" stopColor="#12605e" /><stop offset=".5" stopColor="#2ea36c" /><stop offset="1" stopColor="#9be86c" /></linearGradient>
            </defs>
            <path d="M1 7c0-2 2-3 3.500-1.500L25 24c0 1.500-1 2-2 2H3c-1.500 0-2-1-2-2z" fill="url(#finFront)" />
            <path d="M1 25L22.500 2.500C24 1 25.500 2 25.500 4v14L16 18l-5-3L3 26c-1 0-2 0-2-1z" fill="url(#finBack)" />
          </Icon>
          <span>Finance agents in Microsoft<br />365 Excel (Preview)</span>
        </BigTool>
      </Body>
      <Caption><span>Finance agents in Microsoft 365 Excel (Preview)</span></Caption>
    </Group>
    <Collapse aria-label="Collapse ribbon"><Chev s={11} /></Collapse>
  </>
);

const DotsIcon = () => (
  <Icon s={3} h={12} vb="0 0 3 12" c="none"><path d="M0 1h2v2H0zM0 5h2v2H0zM0 9h2v2H0z" fill="#444" /></Icon>
);

const Tri = ({ d }: { d: string }) => <Icon s={8} vb="0 0 8 8" c="none"><path d={d} fill="#555" /></Icon>;

export default function App() {
  return (
    <Shell>
      <Global />
      <TitleBar>
        <TitleLeft>
          <ExcelLogo />
          <AutoSave>AutoSave<Toggle><input type="checkbox" />Off</Toggle></AutoSave>
          <BarButton $w={24} aria-label="Save"><Icon s={14} c="#a43cb8" sw={1.4}><path d="M1.500 1.500h13v13h-11l-2-2z" fill="#dba6e6" /><path d="M4.500 1.500h7v5h-7zM4.500 14v-4.500h7V14" fill="#fff" /></Icon></BarButton>
          <BarButton $w={22} aria-label="Undo"><Icon s={14} sw={1.3}><path d="M2 1v5.500h5.500M2 6.500C5 2 10 1 12.500 4S13 10 7 15" /></Icon></BarButton>
          <BarButton $w={9} aria-label="Undo list"><Chev /></BarButton>
          <BarButton $w={24} aria-label="Redo"><Icon s={14} c="#a9adae" sw={1.3}><path d="M14 1v5.500H8.500M14 6.500C11 2 6 1 3.500 4S3 10 9 15" /></Icon></BarButton>
          <BarButton $w={8} aria-label="Redo list"><Chev c="#a9adae" /></BarButton>
          <BarButton $w={26} aria-label="Customise toolbar"><Icon s={8} vb="0 0 8 8" c="#444"><path d="M1 1h6M1 3.500l3 3 3-3" /></Icon></BarButton>
          <FileName>WMS_Data_Collection_Checklist<Chev s={9} /></FileName>
        </TitleLeft>
        <SearchBox>
          <Icon s={13} c="#555" sw={1.2}><circle cx="9.500" cy="6.500" r="5" /><path d="M6 10l-5 5" /></Icon>
          <input placeholder="Search" aria-label="Search" />
        </SearchBox>
        <WindowButtons>
          <Avatar>SI</Avatar>
          <BarButton $w={40} aria-label="Minimise"><Icon s={10} vb="0 0 10 10"><path d="M1 5.500h8" /></Icon></BarButton>
          <BarButton $w={40} aria-label="Restore"><Icon s={10} vb="0 0 10 10"><rect x=".5" y="2.500" width="7" height="7" rx="1.500" /><path d="M2.500 1.500c.3-.7 1-1 1.500-1h3.500c1 0 2 .9 2 2V6c0 .6-.5 1.200-1 1.500" /></Icon></BarButton>
          <BarButton $w={40} aria-label="Close"><Icon s={10} vb="0 0 10 10" sw={1.2}><path d="M1 1l8 8M9 1L1 9" /></Icon></BarButton>
        </WindowButtons>
      </TitleBar>

      <TabRow>
        {tabs.map((t) => (
          <Tab key={t} $active={t === 'Home'} $accent={t === 'Table Design'}><span>{t}</span></Tab>
        ))}
        <Actions>
          <ActionButton><Icon s={11}><path d="M1.500 2.500h13v9H7l-3.500 3v-3h-2z" /></Icon>Comments</ActionButton>
          <ActionButton $primary><Icon s={12} c="#fff"><path d="M5 6H2.500v8.500h10V11M10 2l4.500 4L10 10V7.500C7 7.500 5.500 9 5 11c0-4 2-6 5-6.500z" /></Icon>Share<Chev s={8} c="#fff" /></ActionButton>
        </Actions>
      </TabRow>

      <Ribbon>
        <Clipboard /><FontGroup /><Alignment /><NumberGroup /><Styles /><Cells /><Editing /><RestGroups />
      </Ribbon>

      <FormulaRow>
        <Field $w={336}><input aria-label="Name box" defaultValue="C13" /><Chev s={10} /></Field>
        <Dots $w={17}><DotsIcon /></Dots>
        <FxBox>
          <Icon s={12} c="#aaa"><path d="M2 2l12 12M14 2L2 14" /></Icon>
          <Icon s={13} c="#aaa"><path d="M1 8l4.500 5L15 3" /></Icon>
          <Fx>fx</Fx>
          <Chev s={8} c="#888" />
        </FxBox>
        <Field>
          <Spacer $w={5} />
          <input aria-label="Formula" defaultValue="Primary via ASN; fallback manual PO receipt" />
          <Chev s={9} />
        </Field>
      </FormulaRow>

      <GridArea>
        <Sheet>
          <Table>
            <colgroup><col width="23" /><col width="210" /><col width="358" /><col width="407" /><col width="252" /><col /></colgroup>
            <thead>
              <tr>
                <Corner><Icon s={10} vb="0 0 10 10" c="none"><path d="M10 0v10H0z" fill="#d3d6d6" /></Icon></Corner>
                <Letters>A</Letters><Letters>B</Letters><Letters $sel>C</Letters><Letters>D</Letters><Letters />
              </tr>
            </thead>
            <tbody>
              <tr>
                <RowNo>1</RowNo>
                {['Section', 'Data Point', 'Description', 'Notes'].map((h) => (
                  <HeadCell key={h}>{h}<Filter aria-label={`Filter ${h}`}><Icon s={5} vb="0 0 6 6" c="none"><path d="M0 1h6L3 5z" fill="#555" /></Icon></Filter></HeadCell>
                ))}
                <HeadCell />
              </tr>
              {lines.map((line, i) => {
                const n = i + 2;
                return (
                  <tr key={n}>
                    <RowNo $sel={n >= 13 && n <= 15}>{n}</RowNo>
                    {[0, 1, 2, 3, 4].map((c) => (
                      <Cell key={c} $bg={fillFor(n, c)} $open={n === 13 && c === 2}>
                        {line[c]}
                        {n === 13 && c === 2 && <Selection />}
                      </Cell>
                    ))}
                  </tr>
                );
              })}
            </tbody>
          </Table>
          <Pointer>
            <Icon s={14} vb="0 0 14 14" c="#111"><path d="M5 1h4v4h4v4H9v4H5V9H1V5h4z" fill="#fff" /></Icon>
          </Pointer>
        </Sheet>
        <VScroll>
          <Tri d="M4 1l3.500 6h-7z" /><VThumb /><Tri d="M4 7L.5 1h7z" />
        </VScroll>
      </GridArea>

      <SheetBar>
        <BarButton $w={28} aria-label="Previous sheet"><Icon s={9} vb="0 0 8 8" c="#888"><path d="M5.500 1l-3 3 3 3" /></Icon></BarButton>
        <BarButton $w={26} aria-label="Next sheet"><Icon s={9} vb="0 0 8 8" c="#888"><path d="M2.500 1l3 3-3 3" /></Icon></BarButton>
        <Spacer $w={30} />
        <SheetTab $active><span>WMS Data Collection</span></SheetTab>
        <SheetTab>Process Mapping</SheetTab>
        <Spacer $w={24} />
        <BarButton $w={24} aria-label="New sheet"><Icon s={11} vb="0 0 10 10"><path d="M5 0v10M0 5h10" /></Icon></BarButton>
        <Push />
        <Dots $w={35}><DotsIcon /></Dots>
        <HScroll><Tri d="M1 4l6-3.500v7z" /><HThumb /><Tri d="M7 4L1 .5v7z" /></HScroll>
      </SheetBar>

      <Status>
        <span>Ready</span>
        <Access>
          <Icon s={13}><circle cx="7" cy="2.500" r="1.500" /><path d="M1.500 4.500L5 6v3l-2 5M12.500 4.500L9 6v3M5 9h3M10 10l5 5M15 10l-5 5M1.500 4.500c0-2 2-1 3.500-.5h4c2-.5 3.500-1.500 3.500.5" /></Icon>
          Accessibility: Investigate
        </Access>
        <ViewButton $on aria-label="Normal view"><Icon s={12} vb="0 0 12 12"><path d="M.5.500h11v11H.5zM.5 4h11M.5 8h11M4 .5v11M8 .5v11" /></Icon></ViewButton>
        <ViewButton aria-label="Page layout view"><Icon s={12} vb="0 0 12 12"><path d="M.5.500h11v11H.5zM3 2.500h6v7H3zM4 4.500h4M4 6h4M4 7.500h4" /></Icon></ViewButton>
        <ViewButton aria-label="Page break view"><Icon s={12} vb="0 0 12 12"><path d="M.5.500h11v11H.5zM4 .5V7M8 .5V7M.5 7H8" /></Icon></ViewButton>
        <Spacer $w={4} />
        <BarButton $w={10} aria-label="Zoom out"><Icon s={8} vb="0 0 8 8"><path d="M1 4.500h6" /></Icon></BarButton>
        <ZoomSlider type="range" aria-label="Zoom" min={0} max={100} defaultValue={50} />
        <BarButton $w={8} aria-label="Zoom in"><Icon s={8} vb="0 0 8 8"><path d="M0 4.500h8M4 .5v8" /></Icon></BarButton>
        <Spacer $w={8} />
        <span>100%</span>
      </Status>

      <Taskbar>
        <Weather>
          <Icon s={26} vb="0 0 26 26" c="none">
            <path d="M5 20a5 5 0 01.5-9.500A6 6 0 0117 12a4 4 0 011 8z" fill="#a9c4ea" />
            <path d="M5 20a5 5 0 01.5-9.500A6 6 0 0112 9c-2 4-1 8 2 11z" fill="#c9d9f3" />
            <path d="M15 15c3 4 3.500 5 3.500 6.500a3.500 3.500 0 01-7 0c0-1.500 1-3 3.500-6.500z" fill="#1f7ad6" />
            <circle cx="18" cy="6" r="7" fill="#b5201f" />
            <text x="18" y="10" fontSize="10" fill="#fff" textAnchor="middle">1</text>
          </Icon>
          <span><span>16°C</span><span lang="ar" dir="rtl">أمطار خفيفة</span></span>
        </Weather>
        <Apps>
          <AppButton aria-label="Start"><Icon s={20} vb="0 0 20 20" c="none"><defs><linearGradient id="win" x1="0" y1="0" x2="1" y2="1"><stop offset="0" stopColor="#5fd3f7" /><stop offset="1" stopColor="#0a6fc4" /></linearGradient></defs><path d="M0 0h9.500v9.500H0zM10.500 0H20v9.500h-9.500zM0 10.500h9.500V20H0zM10.500 10.500H20V20h-9.500z" fill="url(#win)" /></Icon></AppButton>
          <TaskSearch>
            <Icon s={14} c="#222" sw={1.8}><circle cx="7" cy="7" r="5" /><path d="M11 11l4 4" /></Icon>
            <input placeholder="Search" aria-label="Search the computer" />
          </TaskSearch>
          <AppButton aria-label="Copilot"><CopilotLogo /></AppButton>
          <AppButton $running aria-label="Edge"><Icon s={20} vb="0 0 20 20" c="none"><defs><linearGradient id="edg" x1="0" y1="0" x2="1" y2="0"><stop offset="0" stopColor="#1a8fd8" /><stop offset="1" stopColor="#5fdc6e" /></linearGradient></defs><path d="M0 10a10 10 0 0120-1c0 4-3 5.500-5.500 5.500-2 0-3-.8-2.500-2 .8-1.500.5-4.500-3-4.500S3 11 0 10z" fill="url(#edg)" /><path d="M0 10c0-3 3-5 6-5 3 0 5 1 5.500 3-2-1-4.500 1-4.500 4 0 4 4 6.500 10 4-3 4-7 4.500-9.500 3.700C3 19 0 15 0 10z" fill="#1566b5" /><rect x="0" y="12" width="11" height="8" rx="1" fill="#c87516" /><path d="M3.500 12v-1.500h4V12M0 15.500h11" stroke="#6b3d06" /></Icon></AppButton>
          <AppButton $running aria-label="File Explorer"><Icon s={20} vb="0 0 20 20" c="none"><path d="M0 3a1 1 0 011-1h6l2 2h10a1 1 0 011 1v4H0z" fill="#d99a1c" /><path d="M0 6h20v12a1 1 0 01-1 1H1a1 1 0 01-1-1z" fill="#fccf4d" /><path d="M3 19v-3a2 2 0 012-2h10a2 2 0 012 2v3z" fill="#1e7ec2" /></Icon></AppButton>
          <AppButton aria-label="Teams"><Icon s={20} vb="0 0 20 20" c="none"><circle cx="12" cy="3.500" r="3.300" fill="#6f6be0" /><circle cx="17" cy="5" r="2.400" fill="#4a4fc4" /><path d="M13 8h7v6a4 4 0 01-6 3z" fill="#5558c8" /><path d="M6 8h10v6a5 5 0 01-10 0z" fill="#7b75e8" /><rect x="0" y="9" width="9" height="9" rx="2" fill="#3b3fa8" /><path d="M2.500 11.500h4M4.500 11.500V16" stroke="#fff" strokeWidth="1.200" /></Icon></AppButton>
          <AppButton aria-label="Chrome"><Icon s={20} vb="0 0 20 20" c="none"><circle cx="10" cy="10" r="10" fill="#34a853" /><path d="M10 5h8.700A10 10 0 0110 20l4.500-8z" fill="#fbbc05" /><path d="M1.300 5A10 10 0 0110 0a10 10 0 018.700 5H10L5.500 12z" fill="#e03b2e" /><circle cx="10" cy="10" r="5" fill="#fff" /><circle cx="10" cy="10" r="4" fill="#2f7de1" /></Icon></AppButton>
          <AppButton $running aria-label="Snipping Tool"><Icon s={22} vb="0 0 22 22" c="none"><rect x="1" y="1" width="16" height="16" rx="2" fill="#fbfbfd" /><rect x="3.500" y="3.500" width="9" height="8" stroke="#c4302b" strokeWidth="1.800" strokeDasharray="2 1.500" /><path d="M12.500 4v9.500l2 3.500M8 13.500h8l3-1" stroke="#8a8f98" strokeWidth="2" /><circle cx="19" cy="12" r="2" stroke="#2b8fd0" strokeWidth="1.400" /><circle cx="13.500" cy="19" r="2" stroke="#2b8fd0" strokeWidth="1.400" /></Icon></AppButton>
          <AppButton aria-label="Paint"><Icon s={20} vb="0 0 20 20" c="none"><path d="M10 1C4 1 0 6 1 11c.5 2 2 2 3.500 1.500S7 14 6.500 16c0 3 4 3.500 7 2 7-3 8-17-3.500-17z" fill="#41b4df" /><circle cx="5" cy="7" r="1.600" fill="#2f8f3f" /><circle cx="9" cy="4.500" r="1.500" fill="#f3d13c" /><circle cx="13" cy="5" r="1.500" fill="#d9543c" /><path d="M15 7v7" stroke="#d8b27a" strokeWidth="3" /><path d="M15 12v8" stroke="#8a5a2b" strokeWidth="2" /></Icon></AppButton>
          <AppButton aria-label="Outlook"><Icon s={20} vb="0 0 20 20" c="none"><path d="M5 1h14v10H5z" fill="#2f9be6" /><path d="M12 1h7v5h-7z" fill="#5cc4f5" /><path d="M4 9l8 4 8-4v9a1 1 0 01-1 1H5a1 1 0 01-1-1z" fill="#1670c4" /><path d="M20 9L9 19h10a1 1 0 001-1z" fill="#3fb2ee" /><rect x="0" y="5" width="10" height="10" rx="1" fill="#0e5fae" /><circle cx="5" cy="10" r="2.600" stroke="#fff" strokeWidth="1.400" /></Icon></AppButton>
          <AppButton $running aria-label="Microsoft 365 Copilot"><CopilotLogo s={22} tag /></AppButton>
          <AppButton $active aria-label="Excel"><ExcelLogo s={19} /></AppButton>
        </Apps>
        <Tray>
          <BarButton $w={24} aria-label="Hidden icons"><Icon s={10} vb="0 0 10 10" c="#222" sw={1.2}><path d="M1 7l4-4 4 4" /></Icon></BarButton>
          <BarButton $w={29} aria-label="OneDrive"><Icon s={15} vb="0 0 16 16" c="none"><path d="M4 13a4 4 0 01-.5-7.500A5 5 0 0112 6a3.500 3.500 0 010 7z" fill="#1a8fe8" /><path d="M7 13l5-7a3.500 3.500 0 010 7z" fill="#5fc6f7" /></Icon></BarButton>
          <BarButton $w={24} aria-label="Microphone"><Icon s={14} c="#2b5fa8" sw={1.3}><rect x="5.500" y="1" width="5" height="8.500" rx="2.500" fill="#b9d6f2" /><path d="M3 7.500a5 5 0 0010 0M8 12.500V15" /></Icon></BarButton>
          <BarButton $w={42} aria-label="Language">ENG</BarButton>
          <BarButton $w={20} aria-label="Network"><Icon s={14} c="#222" sw={1.2}><path d="M1 6c4-4 10-4 14 0M3 8.500c3-3 7-3 10 0M5 11c2-2 4-2 6 0" /><circle cx="8" cy="13" r="1" fill="#222" /></Icon></BarButton>
          <BarButton $w={20} aria-label="Volume"><Icon s={14} c="#222"><path d="M1 6h2.500L7 3v10l-3.500-3H1zM9.500 6c1 1 1 3 0 4M11.500 4.500c2 2 2 5 0 7M13.500 3c2.500 3 2.500 7 0 10" /></Icon></BarButton>
          <BarButton $w={18} aria-label="Battery"><Icon s={14} c="#222"><rect x="3.500" y="4.500" width="10.500" height="8" rx="2" /><rect x="5.500" y="6.500" width="6.500" height="4" fill="#222" /><path d="M15.500 7v3M1 1v3M4 1v3M0 4h5v1.500c0 2-1 2.500-2.500 2.500S0 7.500 0 5.500z" fill="#222" /></Icon></BarButton>
          <Clock>1:24 PM<br />12/15/2025</Clock>
          <BarButton $w={14} aria-label="Notifications"><Icon s={14} c="#222"><path d="M3 11V6.500C3 4 5 2 8 2s5 2 5 4.500V11l1.500 1.500h-13zM6 14h4" fill="#222" /><path d="M6.500 5.500h3l-3 4h3" stroke="#fff" /><path d="M12 1h3l-3 3h3" /></Icon></BarButton>
        </Tray>
      </Taskbar>
    </Shell>
  );
}
